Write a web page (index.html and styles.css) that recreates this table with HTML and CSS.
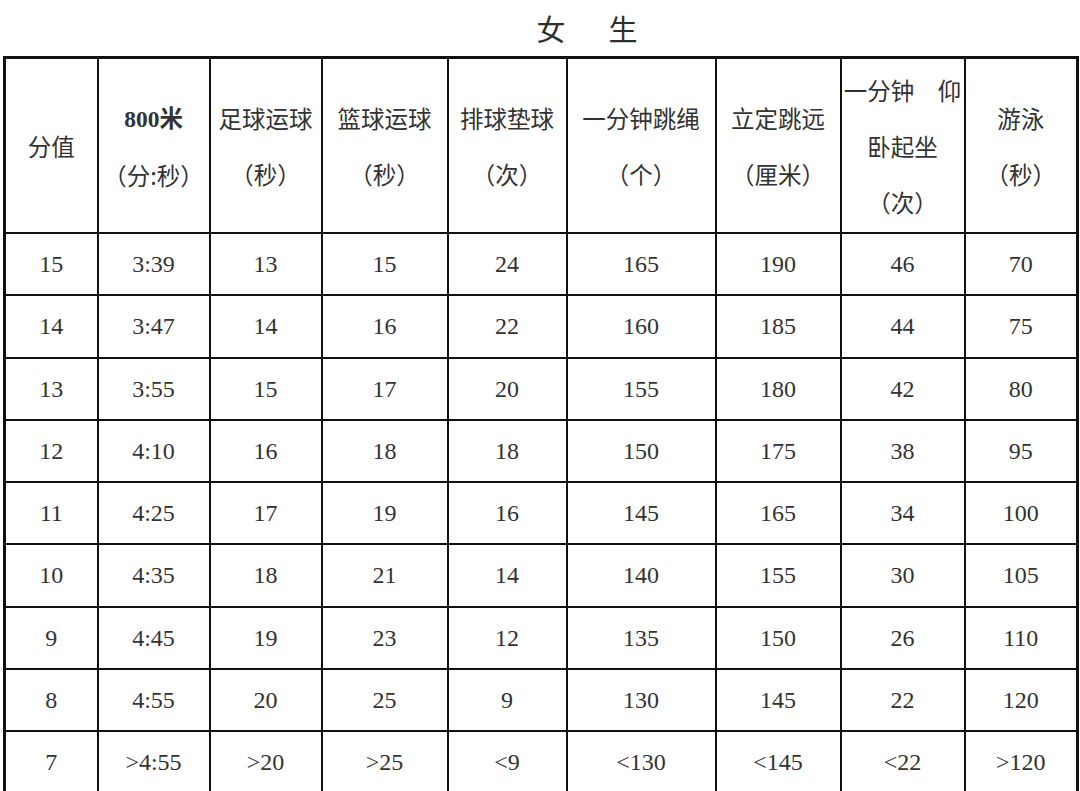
FILE: index.html
```html
<!DOCTYPE html>
<html lang="zh">
<head>
<meta charset="utf-8">
<title>女生</title>
<link rel="stylesheet" href="styles.css">
</head>
<body>
<div class="title"><span class="t1">女</span><span class="t2">生</span></div>
<table class="grid">
<colgroup>
<col class="c1"><col class="c2"><col class="c3"><col class="c4"><col class="c5"><col class="c6"><col class="c7"><col class="c8"><col class="c9">
</colgroup>
<thead>
<tr>
<th>分值</th>
<th><b class="bold">800米</b><br>（分:秒）</th>
<th>足球运球<br>（秒）</th>
<th>篮球运球<br>（秒）</th>
<th>排球垫球<br>（次）</th>
<th>一分钟跳绳<br>（个）</th>
<th>立定跳远<br>（厘米）</th>
<th>一分钟　仰<br>卧起坐<br>（次）</th>
<th>游泳<br>（秒）</th>
</tr>
</thead>
<tbody>
<tr><td>15</td><td>3:39</td><td>13</td><td>15</td><td>24</td><td>165</td><td>190</td><td>46</td><td>70</td></tr>
<tr><td>14</td><td>3:47</td><td>14</td><td>16</td><td>22</td><td>160</td><td>185</td><td>44</td><td>75</td></tr>
<tr><td>13</td><td>3:55</td><td>15</td><td>17</td><td>20</td><td>155</td><td>180</td><td>42</td><td>80</td></tr>
<tr><td>12</td><td>4:10</td><td>16</td><td>18</td><td>18</td><td>150</td><td>175</td><td>38</td><td>95</td></tr>
<tr><td>11</td><td>4:25</td><td>17</td><td>19</td><td>16</td><td>145</td><td>165</td><td>34</td><td>100</td></tr>
<tr><td>10</td><td>4:35</td><td>18</td><td>21</td><td>14</td><td>140</td><td>155</td><td>30</td><td>105</td></tr>
<tr><td>9</td><td>4:45</td><td>19</td><td>23</td><td>12</td><td>135</td><td>150</td><td>26</td><td>110</td></tr>
<tr><td>8</td><td>4:55</td><td>20</td><td>25</td><td>9</td><td>130</td><td>145</td><td>22</td><td>120</td></tr>
<tr><td>7</td><td>&gt;4:55</td><td>&gt;20</td><td>&gt;25</td><td>&lt;9</td><td>&lt;130</td><td>&lt;145</td><td>&lt;22</td><td>&gt;120</td></tr>
</tbody>
</table>
</body>
</html>
```
FILE: styles.css
```css
html, body {
  margin: 0;
  padding: 0;
  background: #ffffff;
}
body {
  color: #333333;
  font-family: "Liberation Serif", "Noto Sans CJK SC", serif;
}
.title {
  height: 56px;
  display: flex;
  align-items: center;
  justify-content: center;
  padding-left: 94px;
  font-family: "Noto Sans CJK SC", sans-serif;
  font-size: 29px;
  line-height: 1;
  color: #2e2e2e;
}
.t1 {
  margin-right: 43px;
}
.grid {
  margin-left: 3px;
  border-collapse: collapse;
  table-layout: fixed;
  width: 1074px;
  border: 3px solid #111111;
}
.c1 { width: 93px; }
.c2 { width: 112px; }
.c3 { width: 112px; }
.c4 { width: 126px; }
.c5 { width: 119px; }
.c6 { width: 149px; }
.c7 { width: 125px; }
.c8 { width: 124px; }
.c9 { width: 113px; }
.grid th,
.grid td {
  border: 2px solid #111111;
  text-align: center;
  vertical-align: middle;
  padding: 0;
  white-space: nowrap;
}
.grid th {
  height: 173px;
  font-family: "Noto Sans CJK SC", sans-serif;
  font-weight: 400;
  font-size: 23.5px;
  line-height: 56px;
  color: #333333;
}
.grid th .bold {
  font-family: "Liberation Serif", "Noto Sans CJK SC", serif;
  font-weight: 700;
}
.grid td {
  height: 60.25px;
  font-family: "Liberation Serif", serif;
  font-size: 24px;
  line-height: 1;
  color: #333333;
}
```
